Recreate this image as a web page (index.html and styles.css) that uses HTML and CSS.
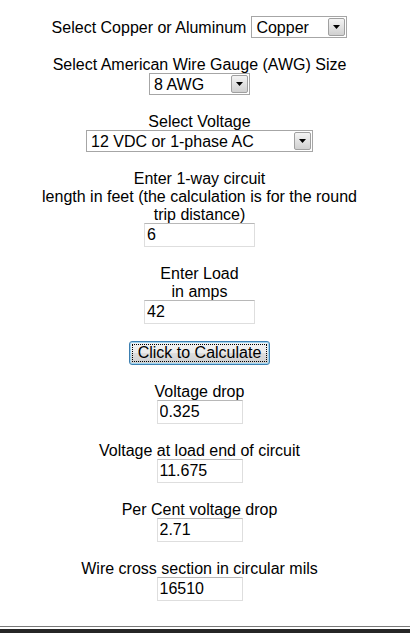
FILE: index.html
```html
<!DOCTYPE html>
<html>
<head>
<meta charset="utf-8">
<link rel="stylesheet" href="styles.css">
</head>
<body>
<main class="calc">
  <div class="block row">
    <span class="label-inline">Select Copper or Aluminum</span>
    <span class="sel sel-metal">
      <select><option>Copper</option><option>Aluminum</option></select>
      <span class="arrow"><svg width="7" height="4" viewBox="0 0 7 4"><path d="M0 0H7L3.5 4Z" fill="#000"/></svg></span>
    </span>
  </div>

  <div class="block">
    <div class="label">Select American Wire Gauge (AWG) Size</div>
    <span class="sel sel-awg ctl">
      <select><option>8 AWG</option></select>
      <span class="arrow"><svg width="7" height="4" viewBox="0 0 7 4"><path d="M0 0H7L3.5 4Z" fill="#000"/></svg></span>
    </span>
  </div>

  <div class="block">
    <div class="label">Select Voltage</div>
    <span class="sel sel-volt ctl">
      <select><option>12 VDC or 1-phase AC</option></select>
      <span class="arrow"><svg width="7" height="4" viewBox="0 0 7 4"><path d="M0 0H7L3.5 4Z" fill="#000"/></svg></span>
    </span>
  </div>

  <div class="block">
    <div class="label">Enter 1-way circuit<br>length in feet (the calculation is for the round trip distance)</div>
    <input class="field wide ctl" type="text" value="6">
  </div>

  <div class="block">
    <div class="label">Enter Load<br>in amps</div>
    <input class="field wide ctl" type="text" value="42">
  </div>

  <div class="block btn-block">
    <button class="calc-btn" type="button">Click to Calculate</button>
  </div>

  <div class="block">
    <div class="label">Voltage drop</div>
    <input class="field narrow ctl" type="text" value="0.325">
  </div>

  <div class="block">
    <div class="label">Voltage at load end of circuit</div>
    <input class="field narrow ctl" type="text" value="11.675">
  </div>

  <div class="block">
    <div class="label">Per Cent voltage drop</div>
    <input class="field narrow ctl" type="text" value="2.71">
  </div>

  <div class="block">
    <div class="label">Wire cross section in circular mils</div>
    <input class="field narrow ctl" type="text" value="16510">
  </div>
</main>
<div class="rule"></div>
</body>
</html>
```

FILE: styles.css
```css
html, body {
  margin: 0;
  padding: 0;
  background: #fff;
}

body {
  font-family: "Liberation Sans", Arial, sans-serif;
  font-size: 16px;
  line-height: 18px;
  color: #000;
  overflow: hidden;
}

.calc {
  width: 331px;
  margin-left: 34px;
  padding-top: 16px;
  display: flex;
  flex-direction: column;
  gap: 16px;
}

.block {
  display: flex;
  flex-direction: column;
  align-items: center;
  text-align: center;
}

.block.row {
  flex-direction: row;
  justify-content: center;
  gap: 5px;
}

.label {
  line-height: 18px;
  padding-top: 2px;
}

.label-inline {
  line-height: 18px;
  padding-top: 1px;
}

.ctl {
  margin-top: -1px;
}

.sel {
  position: relative;
  display: inline-block;
  height: 22px;
}

.sel select {
  -webkit-appearance: none;
  appearance: none;
  box-sizing: border-box;
  height: 22px;
  width: 100%;
  margin: 0;
  padding: 0 20px 0 4px;
  border: 1px solid #a6a6a6;
  border-radius: 0;
  background: #fff;
  font-family: "Liberation Sans", Arial, sans-serif;
  font-size: 16px;
  color: #000;
  text-align: left;
  outline: none;
}

.sel-metal { width: 96px; }
.sel-awg { width: 101px; }
.sel-volt { width: 227px; }

.arrow {
  position: absolute;
  top: 2px;
  right: 2px;
  width: 17px;
  height: 18px;
  box-sizing: border-box;
  border: 1px solid #a0a0a0;
  border-radius: 2px;
  background: linear-gradient(#f4f4f4, #e2e2e2 50%, #d0d0d0);
  display: flex;
  align-items: center;
  justify-content: center;
  pointer-events: none;
}

.arrow svg {
  display: block;
}

.field {
  box-sizing: border-box;
  height: 24px;
  margin-left: 0;
  margin-right: 0;
  margin-bottom: 0;
  padding: 0 2px;
  border: 1px solid #dedede;
  border-top-color: #b8b8b8;
  border-radius: 0;
  background: #fff;
  font-family: "Liberation Sans", Arial, sans-serif;
  font-size: 16px;
  color: #000;
  outline: none;
}

.field.wide { width: 111px; }
.field.narrow { width: 86px; }

.btn-block {
  margin-top: 1px;
}

.calc-btn {
  box-sizing: border-box;
  width: 141px;
  height: 24px;
  margin: 0;
  padding: 0;
  border: 1px solid #3c7fb1;
  border-radius: 3px;
  box-shadow: inset 0 0 0 1px #9fd5f2;
  background: linear-gradient(#f2f2f2 0%, #ebebeb 50%, #dddddd 51%, #cfcfcf 100%);
  font-family: "Liberation Sans", Arial, sans-serif;
  font-size: 16px;
  line-height: 18px;
  color: #000;
  outline: 1px dotted #000;
  outline-offset: -4px;
}

.rule {
  margin-top: 25px;
  height: 10px;
  box-sizing: border-box;
  border-top: 1px solid #7a7a7a;
  border-bottom: 7px solid #262626;
  background: #fff;
}
```
